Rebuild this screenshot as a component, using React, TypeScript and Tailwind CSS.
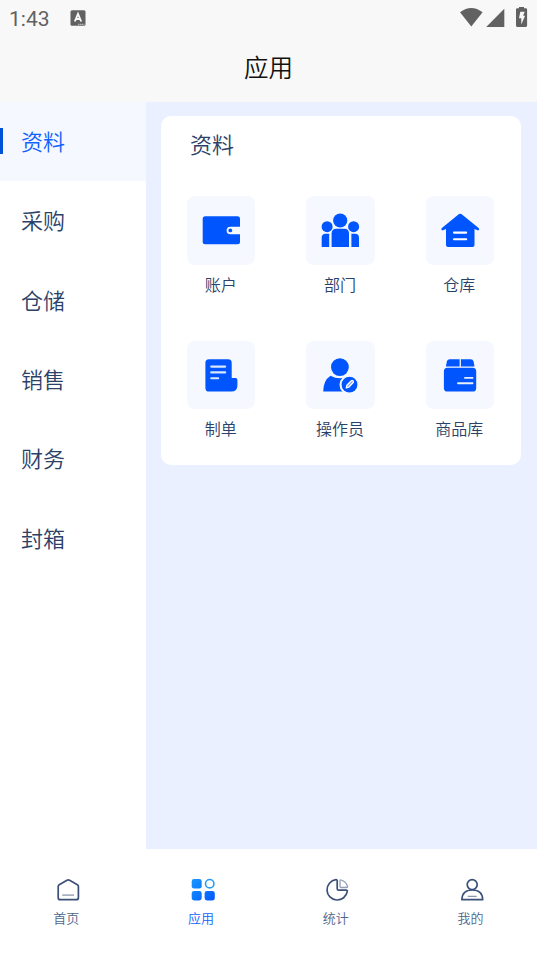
import type { ReactNode } from 'react'
import clsx from 'clsx'

const categories = ['资料', '采购', '仓储', '销售', '财务', '封箱']

const apps: { label: string; icon: ReactNode }[] = [
    {
        label: '账户',
        icon: (
            <>
                <path d="M18.2 20.3h32.3q2.5 0 2.5 2.5v7.9h-9.6a3.8 3.8 0 0 0 0 7.6H53v7.5q0 2.5-2.5 2.5H18.2q-2.5 0-2.5-2.5v-23q0-2.5 2.5-2.5z" />
                <circle cx="43.3" cy="34.4" r="1.9" />
            </>
        ),
    },
    {
        label: '部门',
        icon: (
            <>
                <circle cx="34.2" cy="24.5" r="7.1" />
                <circle cx="21.1" cy="30.7" r="5.5" />
                <circle cx="47.6" cy="30.7" r="5.5" />
                <path d="M25.6 51V37.5q0-4.8 4.8-4.8h7.8q4.8 0 4.8 4.8V51z" />
                <path d="M15.7 51v-9.3q0-4 4-4h3.5V51z" />
                <path d="M45.4 51V37.7h3.6q4 0 4 4V51z" />
            </>
        ),
    },
    {
        label: '仓库',
        icon: (
            <>
                <path d="M32.4 18.4q1.8-1.3 3.6 0l16.6 13.5q1 1 .3 2-.8.8-2 .2l-2.4-1V49q0 2-2 2H22q-2 0-2-2V33.1l-2.4 1q-1.2.6-2-.2-.7-1 .3-2z" />
                <path d="M28 36.6h12.2M28 43.2h12.2" stroke="white" strokeWidth="2.1" strokeLinecap="round" />
            </>
        ),
    },
    {
        label: '制单',
        icon: (
            <>
                <path d="M22 18.3h19.2q3.5 0 3.5 3.5V37h3.8q1.9 0 1.9 1.9v5.6q0 6-6 6H22q-3.6 0-3.6-3.6V21.8q0-3.5 3.6-3.5z" />
                <path d="M24.2 25.6h14M24.2 31.4h14M24.2 37.3h7" stroke="#dbe6ff" strokeWidth="2.1" strokeLinecap="round" />
            </>
        ),
    },
    {
        label: '操作员',
        icon: (
            <>
                <circle cx="33.9" cy="26.1" r="8.9" />
                <path d="M17.2 50.5q0-11 7.3-15.8 9.3 5.2 18.6 0l4 3.6v12.2z" />
                <circle cx="43.5" cy="43.7" r="10" fill="#f5f8ff" />
                <circle cx="43.5" cy="43.7" r="7.9" />
                <path
                    d="m40.3 47 .6-2.8 4.4-4.4q1-.8 1.8 0 .8 1-.1 1.9l-4.3 4.5z"
                    fill="#7fa8ff"
                    stroke="white"
                    strokeWidth="1.3"
                    strokeLinejoin="round"
                />
            </>
        ),
    },
    {
        label: '商品库',
        icon: (
            <>
                <path d="M23.7 18.3h9.9v7.2H19.9l1-5.3q.6-1.9 2.8-1.900zM34.9 18.3h9.8q2.200 0 2.800 1.900l1 5.300H34.900z" />
                <rect x="17.9" y="26.8" width="32.3" height="23.7" rx="3.6" />
                <path d="M39 36.9h7.5M32 42.2h14.5" stroke="#e9f0ff" strokeWidth="1.9" strokeLinecap="round" />
            </>
        ),
    },
]

const tabs: { label: string; icon: ReactNode }[] = [
    {
        label: '首页',
        icon: (
            <>
                <path d="M2.2 8.6q0-1.3 1-1.9L11 2.3q1.3-.7 2.600 0l7.8 4.4q1 .6 1 1.9v11.1q0 2-2 2H4.2q-2 0-2-2z" strokeWidth="1.7" />
                <path d="M6.2 17.1H18" strokeWidth="1.3" opacity="0.6" />
            </>
        ),
    },
    {
        label: '应用',
        icon: (
            <>
                <defs>
                    <linearGradient id="tiles" x1="0" y1="0" x2="24" y2="24" gradientUnits="userSpaceOnUse">
                        <stop stopColor="#1c9aff" />
                        <stop offset="1" stopColor="#0055ff" />
                    </linearGradient>
                </defs>
                <g fill="url(#tiles)" stroke="none">
                    <rect x="0.7" y="1" width="10" height="9.6" rx="2.4" />
                    <rect x="0.7" y="13" width="10" height="9.5" rx="2.4" />
                    <rect x="13.6" y="13" width="10.2" height="9.5" rx="2.4" />
                </g>
                <circle cx="18.7" cy="5.7" r="4.2" stroke="#269bff" strokeWidth="1.6" />
            </>
        ),
    },
    {
        label: '统计',
        icon: (
            <>
                <path d="M12.2 2.8q0-1.2-1.3-1.1A10.2 10.2 0 1 0 22.3 13.4q.2-1.2-1-1.2h-7.6q-1.5 0-1.5-1.5z" strokeWidth="1.7" />
                <path d="M15 2.7q0-1 1-.7 5.2 1.5 6.5 6.5.2 1-.8 1H16q-1 0-1-1z" strokeWidth="1.3" opacity="0.55" />
            </>
        ),
    },
    {
        label: '我的',
        icon: (
            <>
                <circle cx="12.2" cy="6.6" r="5" strokeWidth="1.7" />
                <path d="M1.9 21.7Q2.1 12 12.3 12t10.4 9.7z" strokeWidth="1.7" strokeLinejoin="round" />
                <path d="M7.7 18.4h9" strokeWidth="1.3" opacity="0.6" />
            </>
        ),
    },
]

function StatusBar() {
    return (
        <div className="flex h-9 items-center px-[9px] text-[#616161]">
            <span className="w-[42px] pt-0.5 font-[Roboto] text-[21px] leading-6 font-normal">1:43</span>
            <svg className="ml-[19px] size-4" viewBox="0 0 16 16">
                <rect x="0.5" y="0.3" width="15" height="15.5" rx="1.5" fill="currentColor" />
                <path d="M4.8 11.5 8 4l3.2 7.5M6 9h4" fill="none" stroke="#f8f8f8" strokeWidth="1.9" />
                <path d="M8 14.3h6.5" stroke="#d5d5d5" strokeWidth="0.9" strokeDasharray="1.5 0.4" />
            </svg>
            <svg className="ml-auto h-[22px] w-[70px]" viewBox="458 7 70 22" fill="currentColor">
                <path d="M460 12.2q11.3-8.6 22.6 0L471.3 26.5z" />
                <path d="M486.2 27 504.3 8.8V27z" />
                <path d="M519 8.3V7h5v1.3h1.8q1.3 0 1.3 1.3v16q0 1.3-1.3 1.3h-8.5q-1.3 0-1.3-1.3v-16q0-1.3 1.3-1.3z" />
                <path d="M520.3 11.7h4.4l-1.6 4.1h2l-3.8 8.6v-6.2h-2.3z" fill="#f8f8f8" />
            </svg>
        </div>
    )
}

export default function App() {
    return (
        <div className="flex h-[956px] w-full flex-col overflow-hidden bg-white font-['Noto_Sans_CJK_SC',sans-serif] font-[350] text-[#2b4168]">
            <header className="h-[101.5px] shrink-0 bg-[#f8f8f8]">
                <StatusBar />
                <h1 className="pt-[13px] text-center text-[24.5px] leading-9 font-[350] text-[#111111]">应用</h1>
            </header>

            <main className="flex h-[747px]">
                <nav className="w-[146px] shrink-0">
                    {categories.map((name, i) => (
                        <div
                            key={name}
                            className={clsx(
                                'flex h-[79.3px] items-center text-[22px] leading-8',
                                i === 0 && 'bg-[#f5f8ff] text-[#0f62ff]',
                            )}
                        >
                            <span className={clsx('h-[26px] w-[3px]', i === 0 && 'bg-[#0052d9]')} />
                            <span className="ml-[18px] pb-0.5">{name}</span>
                        </div>
                    ))}
                </nav>

                <section className="flex-1 bg-[#eaf0ff] pt-3.5 pr-4 pl-[15px]">
                    <div className="h-[349.5px] rounded-[10px] bg-white pt-[11px]">
                        <h2 className="pl-[29px] text-[22px] leading-8 font-[350]">资料</h2>
                        <div className="mt-[37.5px] ml-[0.5px] grid w-[358px] grid-cols-3 gap-y-11">
                            {apps.map((app) => (
                                <div key={app.label} className="flex h-[100.5px] flex-col items-center">
                                    <div className="size-[68.5px] rounded-lg bg-[#f5f8ff]">
                                        <svg className="size-full" viewBox="0 0 68.5 68.5" fill="#0055ff">
                                            {app.icon}
                                        </svg>
                                    </div>
                                    <span className="mt-[7px] mr-px text-base leading-6">{app.label}</span>
                                </div>
                            ))}
                        </div>
                    </div>
                </section>
            </main>

            <footer className="-mx-px grid flex-1 grid-cols-4 pt-[29.5px]">
                {tabs.map((tab, i) => (
                    <div
                        key={tab.label}
                        className={clsx('flex flex-col items-center', i === 1 ? 'text-[#0f62ff]' : 'text-[#50658a]')}
                    >
                        <svg className="ml-[3px] size-6" viewBox="0 0 24 24" fill="none" stroke="#3b5078">
                            {tab.icon}
                        </svg>
                        <span className="mt-1.5 text-[13px] leading-5">{tab.label}</span>
                    </div>
                ))}
            </footer>
        </div>
    )
}
